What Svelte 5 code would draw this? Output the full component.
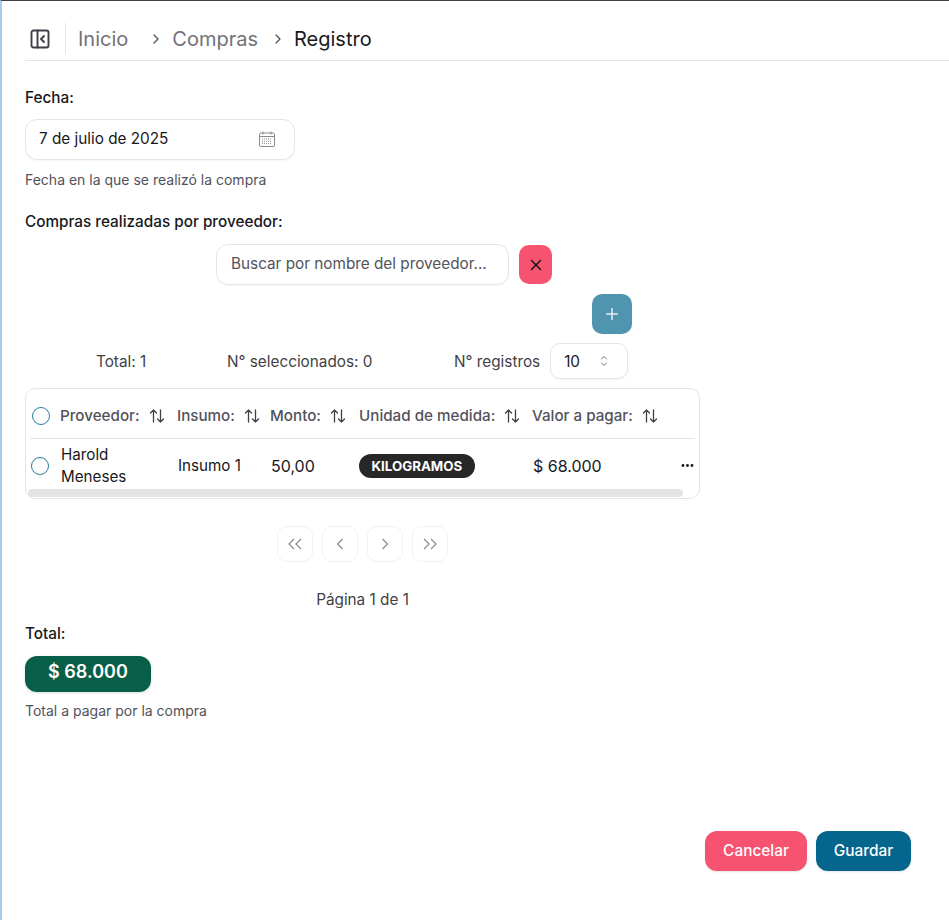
<script>
let columns = [
  { label: "Proveedor:", width: 117 },
  { label: "Insumo:", width: 93 },
  { label: "Monto:", width: 89 },
  { label: "Unidad de medida:", width: 173 },
  { label: "Valor a pagar:", width: 163 }
]

let grid_cols = "29px " + columns.map((c) => c.width + "px").join(" ")

let row = {
  proveedor: "Harold Meneses",
  insumo: "Insumo 1",
  monto: "50,00",
  unidad: "KILOGRAMOS",
  valor: "$ 68.000"
}
</script>

<div class="page">
  <header class="topbar">
    <svg class="panel-icon" viewBox="0 0 20 20" width="20" height="20" fill="none" stroke="#3f3f46" stroke-width="1.9" stroke-linecap="round" stroke-linejoin="round">
      <rect x="1.5" y="1.5" width="17" height="17" rx="2" />
      <path d="M7.5 1.5v17" />
      <path d="M14 7l-3 3 3 3" />
    </svg>
    <span class="sep"></span>
    <nav class="crumbs">
      <span class="crumb inicio">Inicio</span>
      <svg class="chev" viewBox="0 0 10 10" width="10" height="10" fill="none" stroke="#52525b" stroke-width="1.3" stroke-linecap="round" stroke-linejoin="round"><path d="M3 1l4 4-4 4" /></svg>
      <span class="crumb">Compras</span>
      <svg class="chev" viewBox="0 0 10 10" width="10" height="10" fill="none" stroke="#52525b" stroke-width="1.3" stroke-linecap="round" stroke-linejoin="round"><path d="M3 1l4 4-4 4" /></svg>
      <span class="crumb current">Registro</span>
    </nav>
  </header>

  <main class="content">
    <div class="label first">Fecha:</div>
    <div class="date-field">
      <span>7 de julio de 2025</span>
      <svg viewBox="0 0 16 16" width="16" height="16" fill="none" stroke="#8a8a90" stroke-width="1">
        <rect x="0.5" y="2" width="15" height="13.5" rx="1.5" />
        <path d="M0.5 5.5h15M4 0.5v3M12 0.5v3" />
        <path d="M3 8h10M3 10.3h10M3 12.6h10" stroke-dasharray="1 1" />
      </svg>
    </div>
    <div class="hint">Fecha en la que se realizó la compra</div>

    <div class="label second">Compras realizadas por proveedor:</div>

    <div class="search-row">
      <div class="search">Buscar por nombre del proveedor...</div>
      <button class="clear" aria-label="Limpiar">
        <svg viewBox="0 0 12 12" width="12" height="12" fill="none" stroke="#18181b" stroke-width="1.5" stroke-linecap="round"><path d="M1.5 1.5l9 9M10.5 1.5l-9 9" /></svg>
      </button>
    </div>

    <div class="add-row">
      <button class="add" aria-label="Agregar">
        <svg viewBox="0 0 12 12" width="12" height="12" fill="none" stroke="#e6eef2" stroke-width="1.5" stroke-linecap="round"><path d="M6 0.5v11M0.5 6h11" /></svg>
      </button>
    </div>

    <div class="stats">
      <span class="total">Total: 1</span>
      <span class="selected">N° seleccionados: 0</span>
      <span>N° registros</span>
      <div class="select">
        <span>10</span>
        <svg viewBox="0 0 8 12" width="8" height="12" fill="none" stroke="#71717a" stroke-width="1" stroke-linecap="round" stroke-linejoin="round"><path d="M1.5 4L4 1.5 6.5 4M1.5 8L4 10.5 6.5 8" /></svg>
      </div>
    </div>

    <div class="table">
      <div class="thead" style="grid-template-columns: {grid_cols}">
        <span class="radio head-radio"></span>
        {#each columns as col}
          <div class="th">
            <span>{col.label}</span>
            <svg viewBox="0 0 16 16" width="16" height="16" fill="none" stroke="#3f3f46" stroke-width="1.3" stroke-linecap="round" stroke-linejoin="round">
              <path d="M4.5 14V2M1.5 5l3-3 3 3" />
              <path d="M11.5 2v12M8.5 11l3 3 3-3" />
            </svg>
          </div>
        {/each}
      </div>
      <div class="tr" style="grid-template-columns: {grid_cols}">
        <span class="radio"></span>
        <div class="td name">{row.proveedor}</div>
        <div class="td">{row.insumo}</div>
        <div class="td num">{row.monto}</div>
        <div class="td"><span class="badge">{row.unidad}</span></div>
        <div class="td last">
          <span class="num">{row.valor}</span>
          <svg viewBox="0 0 13 3" width="13" height="3" fill="#18181b"><circle cx="2" cy="1.5" r="1.4" /><circle cx="6.5" cy="1.5" r="1.4" /><circle cx="11" cy="1.5" r="1.4" /></svg>
        </div>
      </div>
      <div class="scrollbar"></div>
    </div>

    <div class="pager">
      <button class="page-btn" aria-label="Primera">
        <svg viewBox="0 0 16 12" width="16" height="12"><path d="M7 1L2 6l5 5M14 1L9 6l5 5" /></svg>
      </button>
      <button class="page-btn" aria-label="Anterior">
        <svg viewBox="0 0 16 12" width="16" height="12"><path d="M10.5 1l-5 5 5 5" /></svg>
      </button>
      <button class="page-btn" aria-label="Siguiente">
        <svg viewBox="0 0 16 12" width="16" height="12"><path d="M5.5 1l5 5-5 5" /></svg>
      </button>
      <button class="page-btn" aria-label="Última">
        <svg viewBox="0 0 16 12" width="16" height="12"><path d="M2 1l5 5-5 5M9 1l5 5-5 5" /></svg>
      </button>
    </div>
    <div class="page-info">Página 1 de 1</div>

    <div class="label third">Total:</div>
    <div class="sum">$ 68.000</div>
    <div class="hint">Total a pagar por la compra</div>

    <div class="actions">
      <button class="btn cancel">Cancelar</button>
      <button class="btn save">Guardar</button>
    </div>
  </main>
</div>

<style>
  :global(body) {
    margin: 0;
    background: #fff;
  }

  .page {
    height: 919px;
    border-top: 1px solid #3a3f45;
    border-left: 2px solid #a9cbe8;
    font-family: Inter, "Liberation Sans", sans-serif;
    color: #18181b;
    overflow: hidden;
    box-sizing: content-box;
  }

  .topbar {
    display: flex;
    align-items: center;
    box-sizing: border-box;
    height: 60px;
    margin-left: 23px;
    padding-top: 16px;
    border-bottom: 1px solid #e4e4e7;
  }

  .panel-icon {
    margin-left: 5px;
  }

  .sep {
    width: 1px;
    height: 31px;
    margin: 0 12px 0 15px;
    background: #e4e4e7;
  }

  .crumbs {
    display: flex;
    align-items: center;
    font-size: 20px;
  }

  .crumb {
    color: #71717a;
  }

  .inicio {
    margin-right: 23px;
  }

  .current {
    color: #18181b;
  }

  .chev {
    margin-right: 11px;
  }

  .crumb:not(.inicio) + .chev {
    margin-left: 15px;
  }

  .content {
    padding-left: 23px;
  }

  .label {
    font-size: 15.3px;
    font-weight: 500;
    line-height: 20px;
    color: #18181b;
  }

  .first {
    margin-top: 27px;
  }

  .second {
    margin-top: 22px;
  }

  .third {
    margin-top: 14px;
  }

  .date-field {
    display: flex;
    align-items: center;
    justify-content: space-between;
    box-sizing: border-box;
    width: 270px;
    height: 41px;
    margin-top: 11px;
    padding: 0 19px 2px 13px;
    border: 1px solid #e4e4e7;
    border-radius: 12px;
    font-size: 15.3px;
    box-shadow: 0 1px 2px rgba(0, 0, 0, 0.04);
  }

  .hint {
    margin-top: 10px;
    font-size: 14px;
    line-height: 20px;
    color: #52525b;
  }

  .search-row {
    display: flex;
    gap: 10px;
    margin-top: 12px;
    margin-left: 191px;
  }

  .search {
    box-sizing: border-box;
    width: 293px;
    height: 41px;
    padding-left: 14px;
    border: 1px solid #e4e4e7;
    border-radius: 12px;
    font-size: 15.3px;
    line-height: 37px;
    color: #52525b;
    box-shadow: 0 1px 2px rgba(0, 0, 0, 0.04);
  }

  button {
    font-family: inherit;
    border: none;
    padding: 0;
  }

  .clear {
    display: flex;
    align-items: center;
    justify-content: center;
    width: 33px;
    height: 39px;
    margin-top: 1px;
    border-radius: 10px;
    background: #f5536f;
  }

  .add-row {
    margin-top: 9px;
    margin-left: 567px;
  }

  .add {
    display: flex;
    align-items: center;
    justify-content: center;
    width: 40px;
    height: 40px;
    border-radius: 10px;
    background: #5095b0;
  }

  .stats {
    display: flex;
    align-items: center;
    height: 36px;
    margin-top: 9px;
    padding-left: 71px;
    font-size: 15.3px;
    color: #3f3f46;
  }

  .total {
    width: 131px;
  }

  .selected {
    width: 227px;
  }

  .select {
    display: flex;
    align-items: center;
    justify-content: space-between;
    box-sizing: border-box;
    width: 78px;
    height: 36px;
    margin-left: 10px;
    padding: 0 19px 0 13px;
    border: 1px solid #e4e4e7;
    border-radius: 10px;
    font-size: 15.3px;
    color: #18181b;
    box-shadow: 0 1px 2px rgba(0, 0, 0, 0.04);
  }

  .table {
    position: relative;
    box-sizing: border-box;
    width: 675px;
    height: 111px;
    margin-top: 9px;
    padding: 0 4px;
    border: 1px solid #e4e4e7;
    border-radius: 10px;
    overflow: hidden;
  }

  .thead,
  .tr {
    display: grid;
    align-items: center;
    box-sizing: border-box;
  }

  .thead {
    height: 50px;
    padding-top: 4px;
    border-bottom: 1px solid #e4e4e7;
  }

  .tr {
    height: 50px;
    padding-top: 3px;
  }

  .radio {
    display: block;
    box-sizing: border-box;
    width: 18px;
    height: 18px;
    margin-left: 1px;
    border: 1.5px solid #2b7a9c;
    border-radius: 50%;
  }

  .head-radio {
    margin-left: 2px;
  }

  .th {
    display: flex;
    align-items: center;
    gap: 9px;
    padding-left: 1px;
    font-size: 15.2px;
    font-weight: 500;
    color: #52525b;
    white-space: nowrap;
  }

  .td {
    padding-left: 2px;
    font-size: 15.2px;
    color: #18181b;
  }

  .td.num,
  .td .num {
    font-size: 16px;
  }

  .name {
    width: 90px;
    line-height: 22px;
  }

  .last {
    display: flex;
    align-items: center;
    justify-content: space-between;
  }

  .badge {
    display: inline-block;
    margin-left: -1px;
    padding: 0 12.5px;
    border-radius: 12px;
    background: #27272a;
    color: #fff;
    font-size: 13.3px;
    font-weight: 700;
    line-height: 24px;
  }

  .scrollbar {
    width: 655px;
    height: 8px;
    margin-left: -2px;
    border-radius: 4px;
    background: #e4e4e4;
  }

  .pager {
    display: flex;
    gap: 9px;
    margin-top: 27px;
    margin-left: 252px;
  }

  .page-btn {
    display: flex;
    align-items: center;
    justify-content: center;
    width: 36px;
    height: 36px;
    border: 1px solid #f1f1f2;
    border-radius: 10px;
    background: #fff;
  }

  .page-btn svg {
    fill: none;
    stroke: #8a8a90;
    stroke-width: 1.2;
  }

  .page-info {
    width: 675px;
    margin-top: 28px;
    text-align: center;
    font-size: 15.3px;
    line-height: 20px;
    color: #3f3f46;
  }

  .sum {
    box-sizing: border-box;
    width: 126px;
    height: 36px;
    margin-top: 12px;
    border-radius: 12px;
    background: #085f47;
    color: #fff;
    font-size: 18px;
    font-weight: 600;
    line-height: 32px;
    text-align: center;
    box-shadow: 0 1px 3px rgba(0, 0, 0, 0.15);
  }

  .sum + .hint {
    margin-top: 9px;
  }

  .actions {
    display: flex;
    gap: 9px;
    margin-top: 110px;
    margin-left: 680px;
  }

  .btn {
    height: 40px;
    padding-bottom: 2px;
    border-radius: 12px;
    color: #fff;
    font-size: 15.4px;
    font-weight: 500;
    box-shadow: 0 1px 2px rgba(0, 0, 0, 0.1);
  }

  .cancel {
    width: 102px;
    background: #f5536f;
  }

  .save {
    width: 95px;
    background: #05668d;
  }
</style>
